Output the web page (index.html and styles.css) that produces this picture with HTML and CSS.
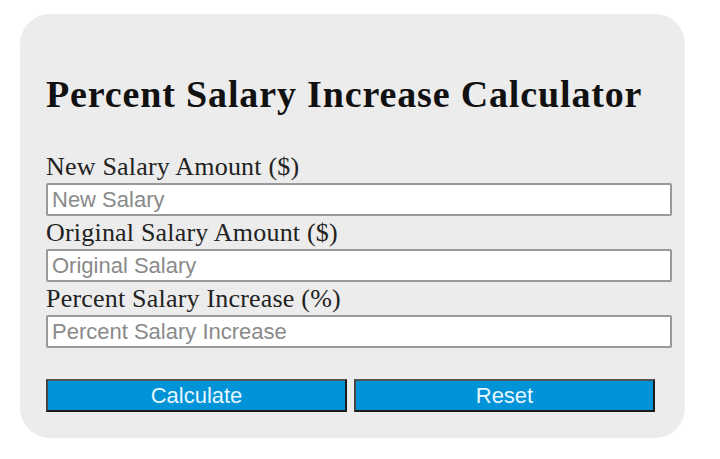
FILE: index.html
```html
<!DOCTYPE html>
<html lang="en">
<head>
  <meta charset="UTF-8">
  <meta name="viewport" content="width=device-width, initial-scale=1.0">
  <title>Percent Salary Increase Calculator</title>
  <link rel="stylesheet" href="styles.css">
</head>
<body>
<div class="calc">
  <h1>Percent Salary Increase Calculator</h1>
  <form class="calc-form" onsubmit="return false">
    <label for="newSalary">New Salary Amount ($)</label>
    <input type="text" id="newSalary" placeholder="New Salary">
    <label for="origSalary">Original Salary Amount ($)</label>
    <input type="text" id="origSalary" placeholder="Original Salary">
    <label for="pctIncrease">Percent Salary Increase (%)</label>
    <input type="text" id="pctIncrease" placeholder="Percent Salary Increase">
    <div class="buttons">
      <button type="button" id="calcBtn">Calculate</button>
      <button type="reset">Reset</button>
    </div>
  </form>
</div>

<script>
  // fill in whichever field is empty from the other two
  document.getElementById('calcBtn').addEventListener('click', function() {
    const n = parseFloat(document.getElementById('newSalary').value);
    const o = parseFloat(document.getElementById('origSalary').value);
    const p = parseFloat(document.getElementById('pctIncrease').value);

    if (isNaN(p) && !isNaN(n) && !isNaN(o)) {
      document.getElementById('pctIncrease').value = ((n - o) / o * 100).toFixed(2);
    } else if (isNaN(n) && !isNaN(o) && !isNaN(p)) {
      document.getElementById('newSalary').value = (o * (1 + p / 100)).toFixed(2);
    } else if (isNaN(o) && !isNaN(n) && !isNaN(p)) {
      document.getElementById('origSalary').value = (n / (1 + p / 100)).toFixed(2);
    }
  });
</script>
</body>
</html>
```

FILE: styles.css
```css
body {
  font-family: "Liberation Serif", "Times New Roman", serif;
  margin: 0;
  background: #fff;
}
.calc {
  margin: 14px 0 0 20px;
  width: 665px;
  height: 424px;
  box-sizing: border-box;
  padding: 60px 13px 0 26px;
  background: #ececec;
  border-radius: 30px;
}
h1 {
  margin: 0 0 36px;
  font-size: 38px;
  line-height: 40px;
  letter-spacing: 0.85px;
  color: #111;
}
.calc-form {
  display: flex;
  flex-direction: column;
}
label {
  font-size: 26px;
  line-height: 33px;
  letter-spacing: 0.2px;
  color: #222;
}
input {
  height: 33px;
  box-sizing: border-box;
  margin: 0;
  padding: 0 4px;
  border: 2px solid #999;
  border-radius: 2px;
  background: #fff;
  font-family: "Liberation Sans", Arial, sans-serif;
  font-size: 22px;
}
input::placeholder {
  color: #8a8a8a;
}
.buttons {
  display: flex;
  gap: 7px;
  margin-top: 31px;
  width: 609px;
}
button {
  flex: 1;
  height: 33px;
  margin: 0;
  border: 2px solid #1b1b1b;
  border-top-color: #555;
  border-left-color: #444;
  background: #0093d8;
  color: #e6f6ff;
  font-family: "Liberation Sans", Arial, sans-serif;
  font-size: 22px;
  cursor: pointer;
}
```
